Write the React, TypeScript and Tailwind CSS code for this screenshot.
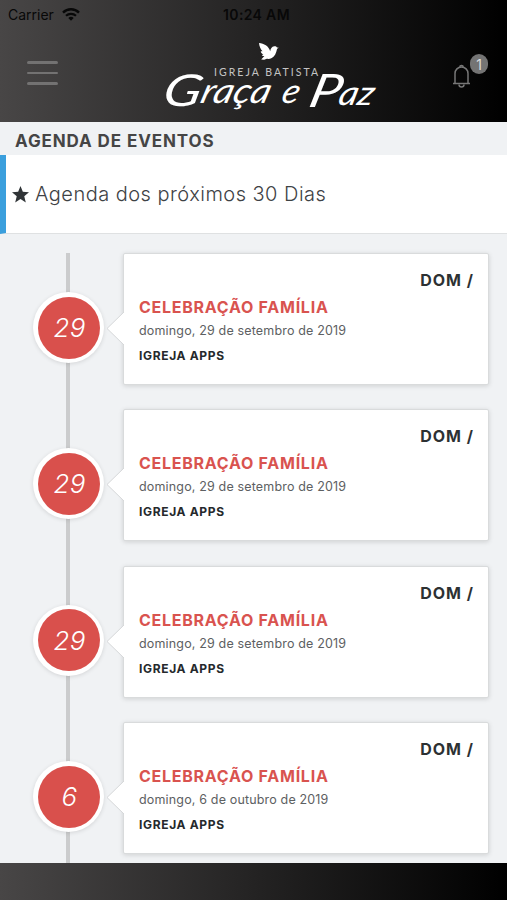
import React from "react";

interface AgendaEvent {
  day: string;
  title: string;
  date: string;
  place: string;
}

const events: AgendaEvent[] = [
  { day: "29", title: "CELEBRAÇÃO FAMÍLIA", date: "domingo, 29 de setembro de 2019", place: "IGREJA APPS" },
  { day: "29", title: "CELEBRAÇÃO FAMÍLIA", date: "domingo, 29 de setembro de 2019", place: "IGREJA APPS" },
  { day: "29", title: "CELEBRAÇÃO FAMÍLIA", date: "domingo, 29 de setembro de 2019", place: "IGREJA APPS" },
  { day: "6", title: "CELEBRAÇÃO FAMÍLIA", date: "domingo, 6 de outubro de 2019", place: "IGREJA APPS" },
];

const WifiIcon: React.FC = () => (
  <svg width="18" height="13" viewBox="0 0 18 13" fill="none" stroke="#080808">
    <path d="M1 4.6a11.4 11.4 0 0 1 16 0" strokeWidth="2.4" />
    <path d="M4 7.8a7.2 7.2 0 0 1 10 0" strokeWidth="2.2" />
    <path d="M6.3 10.1a3.9 3.9 0 0 1 5.4 0L9 12.8Z" fill="#080808" stroke="none" />
  </svg>
);

const Logo: React.FC = () => (
  <svg
    className="overflow-visible"
    width="220"
    height="78"
    viewBox="0 0 220 78"
    fill="#fff"
    fontFamily="Lato, 'Liberation Sans', sans-serif">
    <path d="M96 3c5 .8 9.500 2.500 11.200 8.200.3-2.400 1.600-4.600 4-4.900 1.300-.2 2.300.3 2.800 1.100l1.800.4-1.700 1c-.9 4.400-2.300 7.600-5.300 9.200-1.700.9-3.400 1.100-5 .8l-2.600.9-3-.3 3.200-3.300c-1.200.1-2-.3-2.600-1.200l1.600-.5c-1.800-.9-2.600-1.900-2.600-3.200l1.700.1C97.400 9 96.400 6.500 96 3Z" />
    <text x="51" y="36" fontSize="10.500" fill="#c4c4c4" textLength="104">IGREJA BATISTA</text>
    <g fontStyle="italic">
      <text transform="translate(-2 66) skewX(-12)" fontSize="44" textLength="38" lengthAdjust="spacingAndGlyphs">G</text>
      <text transform="translate(36 63) skewX(-16)" fontSize="35" textLength="69" lengthAdjust="spacingAndGlyphs">raça</text>
      <text transform="translate(117 63) skewX(-16)" fontSize="34" textLength="17" lengthAdjust="spacingAndGlyphs">e</text>
      <text transform="translate(144 67) skewX(-14)" fontSize="46" textLength="31" lengthAdjust="spacingAndGlyphs">P</text>
      <text transform="translate(174 65) skewX(-14)" fontSize="34" textLength="35" lengthAdjust="spacingAndGlyphs">az</text>
    </g>
  </svg>
);

const Header: React.FC = () => (
  <header className="h-[122px] shrink-0 bg-linear-to-r/srgb from-[#484646] to-black">
    <div className="grid h-7 grid-cols-3 items-center px-2 font-['Inter',sans-serif] text-[14px] text-[#080808]">
      <div className="flex items-center gap-2">
        <span>Carrier</span>
        <WifiIcon />
      </div>
      <span className="pl-1.5 text-center font-semibold tracking-[0.35px]">10:24 AM</span>
    </div>
    <div className="flex h-[90px] items-start">
      <div className="mt-[33px] ml-[27px] flex w-[31px] flex-col gap-[8px]">
        <span className="h-[2.5px] rounded bg-[#737272]" />
        <span className="h-[2.5px] rounded bg-[#737272]" />
        <span className="h-[2.5px] rounded bg-[#737272]" />
      </div>
      <div className="mt-[12px] ml-[105px]">
        <Logo />
      </div>
      <div className="relative mt-[36px] ml-[69px]">
        <svg width="19" height="25" viewBox="0 0 19 25" fill="none" stroke="#777" strokeWidth="1.500">
          <path d="M1 19.500h17M3 19.500V9.500a6.500 6.500 0 0 1 13 0v10" />
          <path d="M7.800 3.300a1.700 1.700 0 1 1 3.400 0M7 20.500a2.500 2.500 0 0 0 5 0" />
        </svg>
        <span className="absolute -top-[10px] left-[18px] flex h-5 w-[18px] items-center justify-center rounded-full bg-[#747474] font-['Inter',sans-serif] text-[14px] text-[#ddd]">
          1
        </span>
      </div>
    </div>
  </header>
);

const EventRow: React.FC<{ event: AgendaEvent }> = ({ event }) => (
  <li className="relative flex h-[156.4px] items-start pr-[18px] pl-[33px]">
    <div className="mt-[39px] flex size-[71px] shrink-0 items-center justify-center rounded-full bg-white shadow-[0_1px_4px_rgba(0,0,0,0.12)]">
      <div className="flex size-[62px] items-center justify-center rounded-full bg-[#d9504c] pl-0.5 text-[26px] font-light tracking-[0.3px] text-white italic">
        {event.day}
      </div>
    </div>
    <div className="relative ml-[19px] h-[132px] flex-1 rounded-[2px] border-[1.500px] border-[#d9dbdc] bg-white px-[15px] pt-[16px] shadow-[0_1px_5px_rgba(0,0,0,0.14)]">
      <svg className="absolute top-[57px] -left-[18px]" width="19" height="36" viewBox="0 0 19 36">
        <path d="M19 0 1 17.500 19 35" fill="#fff" stroke="#d5d7d8" />
        <path d="M18.500 0v35" stroke="#fff" />
      </svg>
      <p className="-mr-px text-right text-[16px] leading-5 font-bold tracking-[1px] text-[#2d3133]">DOM /</p>
      <h2 className="mt-[7px] text-[16px] leading-5 font-bold tracking-[0.74px] text-[#d9534f]">{event.title}</h2>
      <p className="mt-[6px] text-[12.500px] leading-4 tracking-[0.16px] text-[#5d6062]">{event.date}</p>
      <p className="mt-[9px] text-[12px] leading-4 font-bold tracking-[0.65px] text-[#25292c]">{event.place}</p>
    </div>
  </li>
);

const App: React.FC = () => (
  <div className="flex h-[900px] w-[507px] flex-col overflow-hidden bg-[#f0f2f4] font-['Inter',sans-serif]">
    <Header />
    <h1 className="h-[33px] shrink-0 pl-[15px] text-[17px] leading-[38px] font-bold tracking-[0.9px] text-[#454545]">
      AGENDA DE EVENTOS
    </h1>
    <div className="flex h-[79px] shrink-0 items-center border-b border-l-[6px] border-b-[#dfe1e2] border-l-[#3b9fdd] bg-white pl-[6px] text-[20px] font-light tracking-[0.47px] text-[#3e4245]">
      <svg className="mr-[6px]" width="17" height="17" viewBox="0 0 24 24" fill="#303437">
        <path d="m12 0 3.300 8.200 8.700.6-6.700 5.700 2.200 8.700L12 18.400l-7.500 4.800 2.200-8.700L0 8.800l8.700-.6Z" />
      </svg>
      Agenda dos próximos 30 Dias
    </div>
    <main className="min-h-0 flex-1 overflow-hidden pt-[19px]">
      <ul className="bg-[linear-gradient(#cbcccd,#cbcccd)] bg-[length:4px_100%] bg-[position:66px_0] bg-no-repeat">
        {events.map((event, i) => (
          <EventRow key={i} event={event} />
        ))}
      </ul>
    </main>
    <footer className="h-[37px] shrink-0 bg-linear-to-r/srgb from-[#484646] to-black" />
  </div>
);

export default App;
